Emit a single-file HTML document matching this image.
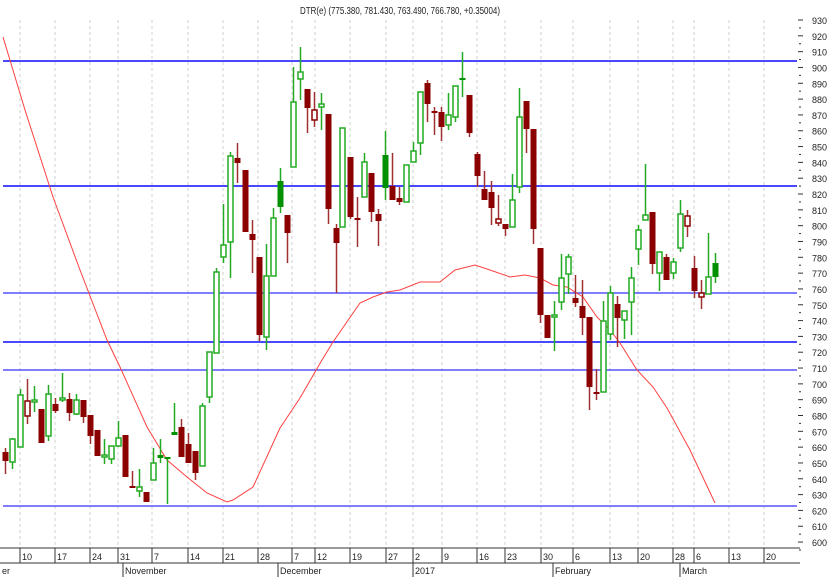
<!DOCTYPE html>
<html><head><meta charset="utf-8"><style>
html,body{margin:0;padding:0;background:#fff;width:827px;height:577px;overflow:hidden}
svg{display:block;font-family:"Liberation Sans",sans-serif}
</style></head><body>
<svg id="s" width="827" height="577" viewBox="0 0 827 577" xmlns="http://www.w3.org/2000/svg">
<g id="grid" stroke="#cfcfcf" stroke-dasharray="3,3" stroke-width="1"></g>
<g id="hl"></g>
<polyline fill="none" stroke="#ff4040" stroke-width="1" points="3,37 25,110 53,197 80,270 107,340 120,367 147,427 167,460 187,477 207,493 227,502 233,500 253,487 280,428 300,398 322,360 333,342 360,303 373,297 387,292 400,290 420,282 440,282 455,270 475,265 490,270 510,277 525,275 540,278 553,285 567,287 583,297 597,317 610,330 620,343 637,370 653,387 667,408 690,450 715,503"/>
<g id="c"></g>
<g id="ax" font-size="10" fill="#222"></g>
<text x="400" y="14" font-size="10" text-anchor="middle" fill="#222" textLength="200" lengthAdjust="spacingAndGlyphs">DTR(e) (775.380, 781.430, 763.490, 766.780, +0.35004)</text>
<line x1="0" y1="548" x2="800" y2="548" stroke="#333"/>
<line x1="0" y1="563" x2="800" y2="563" stroke="#333"/>
</svg>
<script>
var NS="http://www.w3.org/2000/svg";
function el(p,t,a,txt){var e=document.createElementNS(NS,t);for(var k in a)e.setAttribute(k,a[k]);if(txt!=null)e.textContent=txt;document.getElementById(p).appendChild(e);return e;}
var ticks=[[20,"10"],[55,"17"],[90,"24"],[118,"31"],[152,"7"],[188,"14"],[223,"21"],[258,"28"],[292,"7"],[315,"12"],[350,"19"],[386,"27"],[413,"2"],[442,"9"],[477,"16"],[505,"23"],[541,"30"],[573,"6"],[610,"13"],[638,"20"],[673,"28"],[694,"6"],[729,"13"],[764,"20"]];
ticks.forEach(function(t){el("grid","line",{x1:t[0],y1:20,x2:t[0],y2:548});el("ax","line",{x1:t[0],y1:548,x2:t[0],y2:563,stroke:"#333"});el("ax","text",{x:t[0]+2,y:560,"font-size":"9"},t[1]);});
[[0,"er"],[123,"November"],[278,"December"],[413,"2017"],[553,"February"],[680,"March"]].forEach(function(m){if(m[0]>0)el("ax","line",{x1:m[0],y1:563,x2:m[0],y2:577,stroke:"#333"});el("ax","text",{x:m[0]+2,y:574,"font-size":"9"},m[1]);});
for(var v=930;v>=600;v-=10){var y=20+(930-v)*1.582;el("ax","line",{x1:798,y1:y,x2:803,y2:y,stroke:"#333"});el("ax","line",{x1:799,y1:y+7.9,x2:801,y2:y+7.9,stroke:"#333"});el("ax","text",{x:812,y:y+4,"font-size":"9"},String(v));}
[[61,1],[186,1],[342,1],[293,0],[370,0],[506,0]].forEach(function(h){el("hl","line",{x1:3,y1:h[0],x2:797,y2:h[0],stroke:h[1]?"#4848ff":"#3030ff","stroke-width":h[1]?2:1.2});});
var C=[[5,448,474,452,461,"r"],[12,438,469,439,462,"g"],[20,389,447,395,447,"g"],[27,379,424,401,416,"rh"],[34,386,412,400,402,"g"],[41,409,443,409,443,"r"],[48,385,441,394,436,"g"],[55,398,413,404,411,"r"],[62,373,402,398,400,"g"],[69,393,421,399,413,"r"],[76,394,415,400,414,"g"],[83,400,423,400,417,"r"],[90,415,444,415,436,"r"],[97,430,456,430,456,"r"],[104,439,464,455,457,"g"],[111,446,464,446,459,"g"],[118,421,447,438,446,"g"],[125,435,477,435,477,"r"],[132,471,487,486,488,"r"],[139,469,497,487,491,"g"],[146,492,502,492,502,"r"],[153,448,480,463,480,"g"],[160,439,463,455,458,"G"],[167,457,504,457,459,"G"],[174,403,435,432,435,"G"],[181,419,457,427,457,"r"],[188,433,463,444,463,"r"],[195,451,480,451,473,"r"],[202,403,466,406,466,"g"],[209,352,403,352,397,"g"],[216,268,353,272,353,"g"],[223,204,263,245,257,"g"],[230,152,278,156,242,"g"],[237,143,183,158,163,"r"],[245,170,232,170,232,"r"],[252,220,273,234,240,"r"],[259,257,341,257,335,"r"],[266,244,350,276,337,"g"],[273,208,276,218,276,"g"],[280,168,213,181,207,"G"],[287,215,263,215,233,"r"],[293,67,167,102,167,"g"],[300,47,100,72,79,"g"],[307,89,133,89,108,"r"],[314,92,127,110,120,"rh"],[321,93,130,104,107,"g"],[328,114,224,114,209,"r"],[336,224,293,228,243,"r"],[342,128,227,128,227,"g"],[350,157,219,157,217,"r"],[357,197,247,218,220,"r"],[364,153,197,162,197,"g"],[371,173,222,173,212,"r"],[378,209,246,214,221,"r"],[385,131,200,155,188,"G"],[392,153,200,186,200,"r"],[399,187,205,198,202,"r"],[406,165,202,165,202,"g"],[413,142,162,151,162,"g"],[420,92,155,92,143,"g"],[427,80,122,83,104,"r"],[434,107,135,111,113,"r"],[441,107,141,112,127,"r"],[448,93,130,115,125,"g"],[455,86,122,86,117,"g"],[462,52,97,78,80,"G"],[469,95,137,95,133,"r"],[477,152,187,154,176,"r"],[484,171,200,189,200,"r"],[491,181,225,192,208,"r"],[498,195,226,219,223,"rh"],[505,224,236,224,229,"r"],[512,174,227,200,227,"g"],[519,88,193,117,187,"g"],[526,101,153,101,129,"r"],[533,129,244,129,229,"r"],[540,248,323,248,315,"r"],[547,315,338,315,338,"r"],[554,301,351,315,317,"g"],[561,254,310,278,302,"g"],[568,254,294,257,274,"g"],[575,275,307,298,303,"r"],[582,280,335,306,318,"r"],[589,317,410,317,387,"r"],[596,369,400,392,394,"r"],[603,301,392,321,392,"g"],[610,286,340,293,334,"g"],[617,296,347,304,318,"r"],[624,311,339,311,320,"g"],[631,267,335,278,302,"g"],[638,225,265,230,249,"g"],[645,164,220,215,220,"g"],[652,212,274,212,264,"r"],[659,252,291,252,273,"g"],[666,254,280,257,280,"r"],[673,258,279,262,273,"g"],[680,200,252,214,248,"g"],[687,210,237,216,226,"rh"],[694,256,298,268,291,"r"],[701,280,309,293,297,"rh"],[708,233,294,277,294,"g"],[715,253,283,263,277,"G"]];
C.forEach(function(c){var t=c[5],red=t[0]=="r",col=red?"#8b0000":"#22aa22";
el("c","line",{x1:c[0]+0.5,y1:c[1],x2:c[0]+0.5,y2:c[2],stroke:red?"#a03030":"#22aa22","stroke-width":1.5});
var h=Math.max(2,c[4]-c[3]);
if(t=="g"||t=="rh")el("c","rect",{x:c[0]-2,y:c[3],width:5,height:h,fill:"#fff",stroke:col,"stroke-width":1.5});
else el("c","rect",{x:c[0]-2.5,y:c[3],width:6,height:h,fill:t=="G"?"#009000":"#8b0000"});});
</script>
</body></html>
